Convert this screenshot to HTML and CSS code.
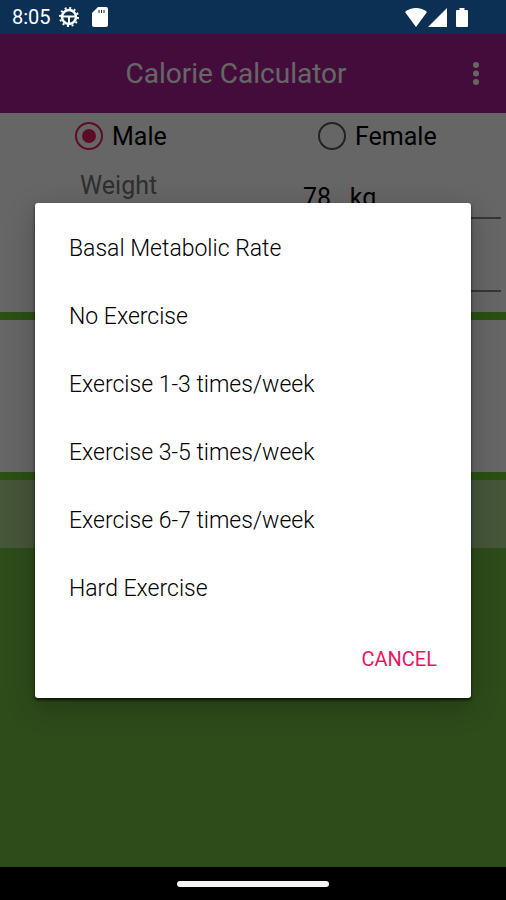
FILE: index.html
```html
<!DOCTYPE html>
<html lang="en">
<head>
  <meta charset="utf-8">
  <meta name="viewport" content="width=device-width, initial-scale=1">
  <title>Calorie Calculator</title>
  <link rel="stylesheet" href="styles.css">
</head>
<body>
  <div class="status-bar">
    <span class="time">8:05</span>
    <svg class="icon-debug" width="20" height="20" viewBox="0 0 20 20" fill="none" stroke="#fff">
      <circle cx="10" cy="10" r="7" stroke-width="2.500"/>
      <circle cx="10" cy="10" r="9" stroke-width="2" stroke-dasharray="2 2.71"/>
      <path d="M3 9.500h14M10 9.500V17" stroke-width="2"/>
    </svg>
    <svg width="16" height="20" viewBox="0 0 16 20">
      <path d="M6 0h8a2 2 0 0 1 2 2v16a2 2 0 0 1-2 2H2a2 2 0 0 1-2-2V6z" fill="#fff"/>
      <path d="M7 3v3M9.500 3v3M12 3v3" stroke="#0b3054" stroke-width="1"/>
    </svg>
    <div class="signals">
      <svg width="22" height="19" viewBox="0 0 22 19"><path d="M0 4C6-1.300 16-1.300 22 4L11 19z" fill="#fff"/></svg>
      <svg width="19" height="19" viewBox="0 0 19 19"><path d="M19 0v19H0z" fill="#fff"/></svg>
      <svg class="battery" width="12" height="19" viewBox="0 0 12 19"><path d="M3.500 0h5v2H11q1 0 1 1v15q0 1-1 1H1q-1 0-1-1V3q0-1 1-1h2.500z" fill="#fff"/></svg>
    </div>
  </div>

  <main class="app">
    <header class="app-bar">
      <h1>Calorie Calculator</h1>
      <button class="menu" aria-label="More options">
        <svg width="6" height="24" viewBox="0 0 6 24" fill="#fff"><circle cx="3" cy="3" r="3"/><circle cx="3" cy="11.500" r="3"/><circle cx="3" cy="20" r="3"/></svg>
      </button>
    </header>

    <form class="form">
      <div class="form-row gender">
        <label><input type="radio" name="gender" checked> Male</label>
        <label><input type="radio" name="gender"> Female</label>
      </div>
      <div class="form-row">
        <label class="field-label" for="weight">Weight</label>
        <input class="field" type="text" id="weight" value="78   kg">
      </div>
      <div class="form-row">
        <span></span>
        <input class="field" type="text" aria-label="Height">
      </div>
    </form>
    <section class="result"></section>
    <section class="summary"></section>

    <div class="overlay">
      <div class="dialog" role="dialog" aria-label="Exercise">
        <button class="option">Basal Metabolic Rate</button>
        <button class="option">No Exercise</button>
        <button class="option">Exercise 1-3 times/week</button>
        <button class="option">Exercise 3-5 times/week</button>
        <button class="option">Exercise 6-7 times/week</button>
        <button class="option">Hard Exercise</button>
        <div class="actions">
          <button class="cancel">CANCEL</button>
        </div>
      </div>
    </div>
  </main>

  <div class="nav-bar"><div class="handle"></div></div>
</body>
</html>
```
FILE: styles.css
```css
* {
  box-sizing: border-box;
}

body {
  margin: 0;
  min-height: 100vh;
  display: flex;
  flex-direction: column;
  font-family: Roboto, "Liberation Sans", sans-serif;
  font-size: 25px;
}

button {
  border: none;
  background: none;
  padding: 0;
  font-family: inherit;
  cursor: pointer;
}

.status-bar {
  height: 34px;
  padding: 0 38px 0 12px;
  display: flex;
  align-items: center;
  background-color: #0b3054;
  color: #ffffff;
}

.time {
  font-size: 20px;
}

.icon-debug {
  margin: 0 13px 0 8px;
}

.signals {
  margin-left: auto;
  display: flex;
  gap: 1px;
}

.battery {
  margin-left: 8px;
}

.app {
  position: relative;
  flex: 1;
  display: flex;
  flex-direction: column;
  background-color: #70be43;
}

.app-bar {
  height: 79px;
  padding: 0 27px;
  display: flex;
  align-items: center;
  background-color: #a82094;
  color: #ffffff;
}

.app-bar h1 {
  flex: 1;
  margin: 0;
  padding-right: 28px;
  font-size: 28px;
  font-weight: 400;
  text-align: center;
}

.menu {
  display: flex;
}

.form {
  height: 199px;
  background-color: #ffffff;
}

.form-row {
  display: grid;
  grid-template-columns: 243px 1fr;
  height: 73px;
  padding: 0 5px 0 56px;
}

.form-row.gender {
  height: 33px;
  padding-left: 75px;
}

.gender label {
  height: 46px;
  display: flex;
  align-items: center;
  gap: 9px;
}

.gender input {
  appearance: none;
  display: grid;
  place-items: center;
  width: 28px;
  height: 28px;
  margin: 0;
  border: 2px solid #555555;
  border-radius: 50%;
}

.gender input:checked {
  border-color: #e91e63;
}

.gender input:checked::before {
  content: "";
  width: 14px;
  height: 14px;
  border-radius: 50%;
  background-color: #e91e63;
}

.field-label {
  padding: 25px 24px;
  color: #757575;
}

.field {
  width: 100%;
  height: 73px;
  padding: 32px 4px 0;
  border: none;
  border-bottom: 2px solid #888888;
  font-family: inherit;
  font-size: 25px;
  background: none;
  outline: none;
}

.result {
  height: 168px;
  border: solid #6bc830;
  border-width: 8px 0;
  background-color: #ffffff;
}

.summary {
  height: 68px;
  background-color: #afd78e;
}

.overlay {
  position: absolute;
  inset: 0;
  display: flex;
  align-items: center;
  padding: 0 35px;
  background-color: rgba(0, 0, 0, 0.6);
}

.dialog {
  width: 100%;
  padding: 11px 0;
  border-radius: 3px;
  background-color: #ffffff;
  box-shadow: 0 2px 3px rgba(0, 0, 0, 0.7), 0 8px 28px rgba(0, 0, 0, 0.25);
}

.option {
  display: block;
  width: 100%;
  height: 68px;
  padding: 0 34px;
  font-size: 23px;
  font-weight: 300;
  text-align: left;
  color: #000000;
}

.actions {
  display: flex;
  justify-content: flex-end;
  padding: 9px 24px 0;
}

.cancel {
  height: 56px;
  padding: 0 10px;
  font-size: 20px;
  color: #ec1561;
}

.nav-bar {
  height: 33px;
  display: flex;
  align-items: center;
  justify-content: center;
  background-color: #000000;
}

.handle {
  width: 30%;
  height: 6px;
  border-radius: 3px;
  background-color: #f5f5f5;
}
```
